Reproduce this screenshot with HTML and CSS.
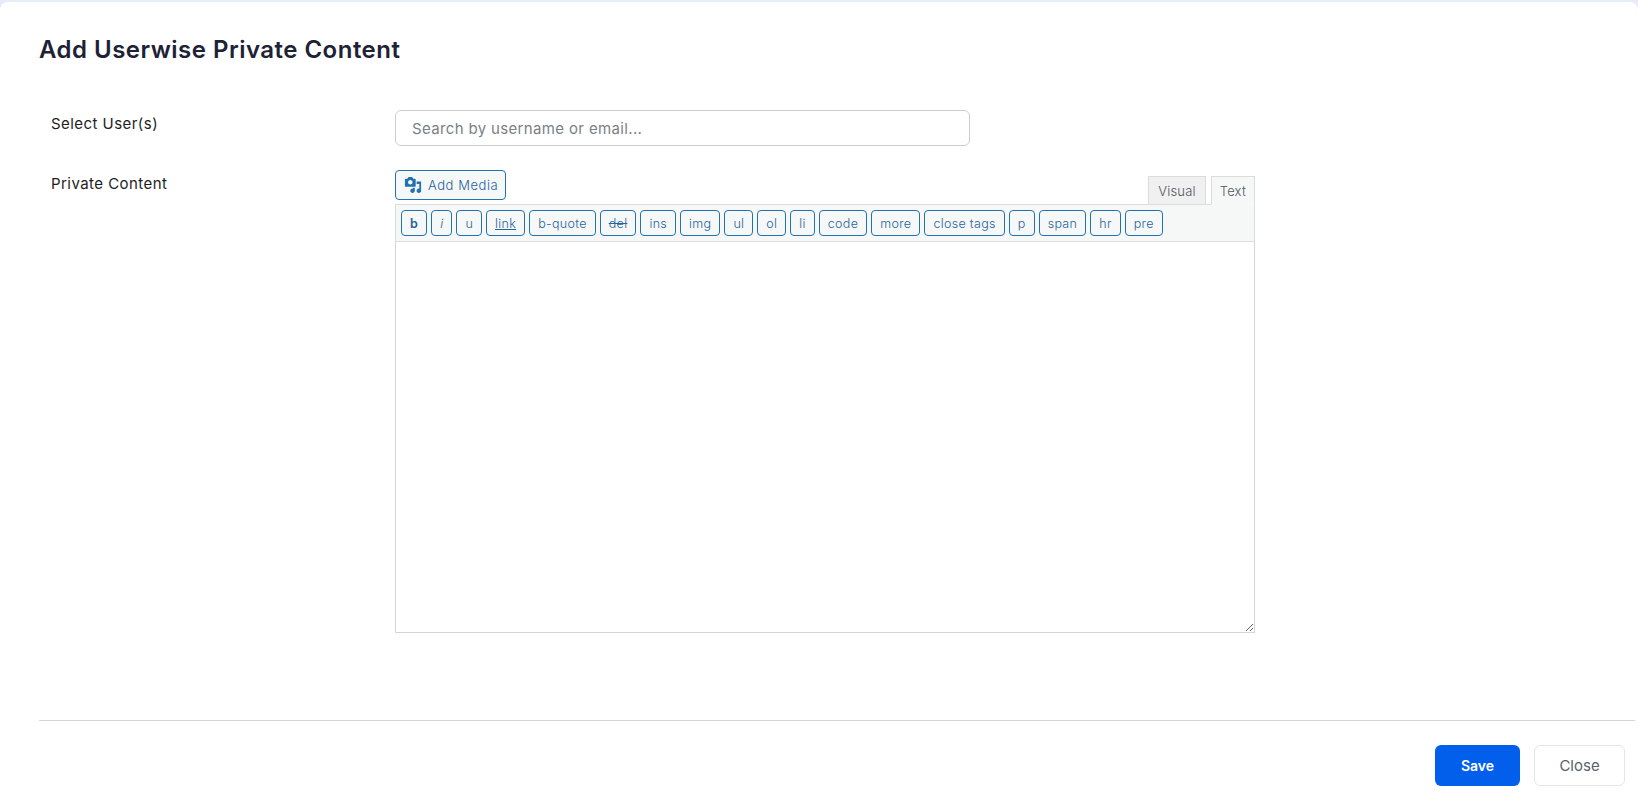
FILE: index.html
```html
<!DOCTYPE html>
<html lang="en">
<head>
    <meta charset="UTF-8">
    <title>Add Userwise Private Content</title>
    <link rel="stylesheet" href="styles.css">
</head>
<body>

<div class="modal">
    <h1 class="modal-title">Add Userwise Private Content</h1>

    <div class="form-row form-row-user">
        <label class="form-label" for="userSearch">Select User(s)</label>
        <input class="search-input" id="userSearch" type="text" placeholder="Search by username or email...">
    </div>

    <div class="form-row">
        <label class="form-label" for="privateContent">Private Content</label>
        <div class="editor">
            <div class="editor-top">
                <button class="media-button">
                    <svg class="media-icon" viewBox="0 0 20 20" width="18" height="18">
                        <path fill="#2271b1" d="M13 11V4c0-.55-.45-1-1-1h-1.670L9 1H5L3.670 3H2c-.55 0-1 .45-1 1v7c0 .55.45 1 1 1h10c.55 0 1-.45 1-1zM7 4.500c1.380 0 2.500 1.120 2.500 2.500S8.380 9.500 7 9.500 4.500 8.380 4.500 7 5.620 4.500 7 4.500zM14 6h5v10.500c0 1.380-1.120 2.500-2.500 2.500S14 17.880 14 16.500s1.120-2.500 2.500-2.500c.17 0 .34.020.5.050V9h-3V6zm-4 8.050V13h2v3.500c0 1.380-1.120 2.500-2.500 2.500S7 17.880 7 16.500 8.120 14 9.500 14c.17 0 .34.020.5.050z"/>
                    </svg>
                    Add Media
                </button>
                <div class="editor-tabs">
                    <span class="tab">Visual</span>
                    <span class="tab tab-active">Text</span>
                </div>
            </div>
            <div class="toolbar">
                <button class="tool tool-bold">b</button>
                <button class="tool tool-italic">i</button>
                <button class="tool">u</button>
                <button class="tool tool-link">link</button>
                <button class="tool">b-quote</button>
                <button class="tool tool-del">del</button>
                <button class="tool">ins</button>
                <button class="tool">img</button>
                <button class="tool">ul</button>
                <button class="tool">ol</button>
                <button class="tool">li</button>
                <button class="tool">code</button>
                <button class="tool">more</button>
                <button class="tool">close tags</button>
                <button class="tool">p</button>
                <button class="tool">span</button>
                <button class="tool">hr</button>
                <button class="tool">pre</button>
            </div>
            <textarea class="editor-area" id="privateContent"></textarea>
        </div>
    </div>

    <div class="modal-footer">
        <button class="btn btn-save">Save</button>
        <button class="btn btn-close">Close</button>
    </div>
</div>

</body>
</html>
```

FILE: styles.css
```css
body {
    margin: 0;
    font-family: "Inter", "Liberation Sans", sans-serif;
    background-color: #e8ebfa;
}

.modal {
    height: 808px;
    margin-top: 2px;
    padding: 0 3px 0 39px;
    box-sizing: border-box;
    background-color: #fff;
    border-radius: 8px 8px 0 0;
    overflow: hidden;
}

.modal-title {
    margin: 31px 0 43px;
    font-size: 24px;
    line-height: 34px;
    font-weight: 600;
    letter-spacing: 0.48px;
    color: #1d2235;
}

.form-row {
    display: flex;
    align-items: flex-start;
    padding-left: 12px;
}

.form-row-user {
    margin-bottom: 24px;
}

.form-label {
    width: 344px;
    flex-shrink: 0;
    margin-top: 3px;
    font-size: 15px;
    line-height: 22px;
    letter-spacing: 0.45px;
    color: #1e1e1e;
}

.search-input {
    width: 575px;
    height: 36px;
    padding: 0 16px;
    box-sizing: border-box;
    border: 1px solid #c8ccd4;
    border-radius: 6px;
    font-family: inherit;
    font-size: 15px;
    letter-spacing: 0.35px;
    color: #333;
}

.search-input::placeholder {
    color: #7b7f87;
}

.editor {
    width: 860px;
}

.editor-top {
    display: flex;
    justify-content: space-between;
    align-items: flex-end;
    height: 34px;
}

.media-button {
    display: flex;
    align-items: center;
    gap: 6px;
    width: 111px;
    height: 30px;
    margin-bottom: 4px;
    padding: 0 8px;
    box-sizing: border-box;
    background-color: #f6f7f7;
    border: 1px solid #2271b1;
    border-radius: 4px;
    font-family: inherit;
    font-size: 13px;
    font-weight: 300;
    letter-spacing: 0.55px;
    white-space: nowrap;
    color: #1f659e;
}

.media-icon {
    flex-shrink: 0;
}

.editor-tabs {
    display: flex;
    gap: 5px;
    margin-bottom: -1px;
}

.tab {
    height: 29px;
    padding: 0 9px;
    box-sizing: border-box;
    border: 1px solid #dcdcde;
    background-color: #f0f0f1;
    font-size: 13px;
    font-weight: 300;
    line-height: 28px;
    letter-spacing: 0.2px;
    color: #50575e;
}

.tab-active {
    padding: 0 8px;
    background-color: #f6f7f7;
    border-bottom-color: #f6f7f7;
    position: relative;
}

.toolbar {
    display: flex;
    gap: 4px;
    height: 38px;
    padding: 5px 5px 0;
    box-sizing: border-box;
    background-color: #f6f7f7;
    border: 1px solid #dcdcde;
}

.tool {
    height: 26px;
    padding: 0 8px;
    background-color: #f6f7f7;
    border: 1px solid #2271b1;
    border-radius: 4px;
    font-family: inherit;
    font-size: 12.500px;
    font-weight: 300;
    letter-spacing: 0.32px;
    color: #1f659e;
}

.tool-bold {
    font-weight: 600;
}

.tool-italic {
    font-style: italic;
}

.tool-link {
    text-decoration: underline;
}

.tool-del {
    text-decoration: line-through;
}

.editor-area {
    display: block;
    width: 100%;
    height: 391px;
    box-sizing: border-box;
    border: 1px solid #d5d5d8;
    border-top: none;
    background-color: #fff;
    outline: none;
}

.modal-footer {
    display: flex;
    justify-content: flex-end;
    gap: 14px;
    margin-top: 87px;
    padding: 24px 10px 0 0;
    border-top: 1px solid #d5d5d5;
}

.btn {
    height: 41px;
    border-radius: 6px;
    font-family: inherit;
    font-size: 14px;
}

.btn-save {
    width: 85px;
    background-color: #015fec;
    border: none;
    font-weight: 600;
    color: #fff;
}

.btn-close {
    width: 91px;
    background-color: #fff;
    border: 1px solid #e3e5e8;
    font-size: 15px;
    color: #5b616b;
}
```
